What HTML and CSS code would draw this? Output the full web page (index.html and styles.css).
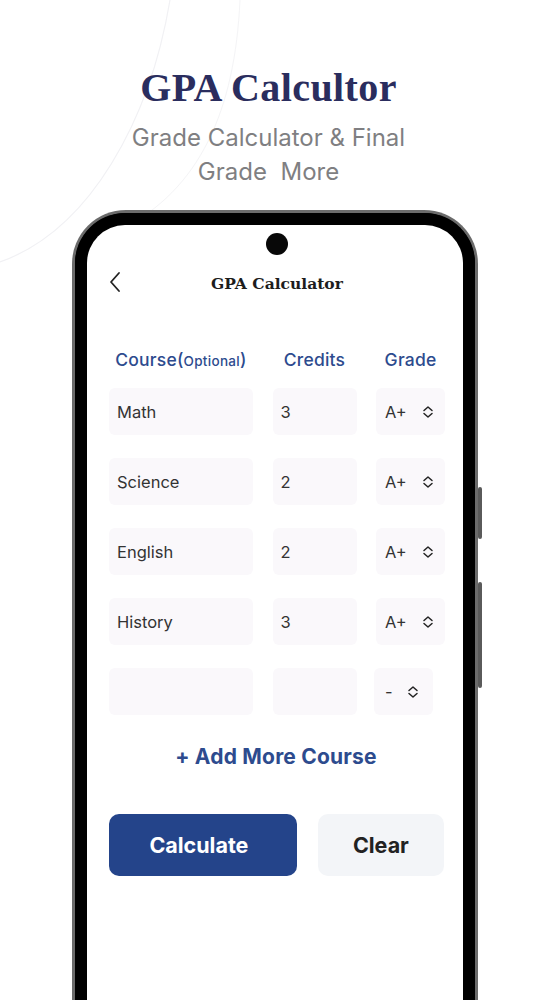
FILE: index.html
```html
<!DOCTYPE html>
<html>
<head>
<meta charset="utf-8">
<link rel="stylesheet" href="styles.css">
</head>
<body>
<div class="page">
  <svg class="deco" width="537" height="300" viewBox="0 0 537 300">
    <path d="M170 0 C 150 120, 90 230, 0 262" fill="none" stroke="#f1f1f4" stroke-width="1.2"/>
    <path d="M240 0 C 235 110, 200 190, 120 230" fill="none" stroke="#f4f4f6" stroke-width="1"/>
  </svg>
  <header class="hero">
    <h1 class="hero-title">GPA Calcultor</h1>
    <p class="hero-sub">Grade Calculator &amp; Final<br>Grade&nbsp; More</p>
  </header>
  <div class="phone">
    <span class="side-btn side-btn-1"></span>
    <span class="side-btn side-btn-2"></span>
    <div class="bezel">
      <div class="screen">
        <div class="camera"></div>
        <div class="nav">
          <svg class="back" width="14" height="22" viewBox="0 0 14 22"><path d="M11 2 L3 11 L11 20" fill="none" stroke="#222" stroke-width="1.8" stroke-linecap="round" stroke-linejoin="round"/></svg>
          <div class="nav-title">GPA Calculator</div>
        </div>
        <div class="table">
          <div class="th">Course<span class="opt">(<small>Optional</small>)</span></div>
          <div class="th">Credits</div>
          <div class="th">Grade</div>

          <div class="cell">Math</div>
          <div class="cell">3</div>
          <div class="cell grade">A+<svg class="ud" width="12" height="14" viewBox="0 0 12 14"><path d="M2 5.5 L6 2 L10 5.5 M2 8.5 L6 12 L10 8.5" fill="none" stroke="#222" stroke-width="1.5" stroke-linecap="round" stroke-linejoin="round"/></svg></div>

          <div class="cell">Science</div>
          <div class="cell">2</div>
          <div class="cell grade">A+<svg class="ud" width="12" height="14" viewBox="0 0 12 14"><path d="M2 5.5 L6 2 L10 5.5 M2 8.5 L6 12 L10 8.5" fill="none" stroke="#222" stroke-width="1.5" stroke-linecap="round" stroke-linejoin="round"/></svg></div>

          <div class="cell">English</div>
          <div class="cell">2</div>
          <div class="cell grade">A+<svg class="ud" width="12" height="14" viewBox="0 0 12 14"><path d="M2 5.5 L6 2 L10 5.5 M2 8.5 L6 12 L10 8.5" fill="none" stroke="#222" stroke-width="1.5" stroke-linecap="round" stroke-linejoin="round"/></svg></div>

          <div class="cell">History</div>
          <div class="cell">3</div>
          <div class="cell grade">A+<svg class="ud" width="12" height="14" viewBox="0 0 12 14"><path d="M2 5.5 L6 2 L10 5.5 M2 8.5 L6 12 L10 8.5" fill="none" stroke="#222" stroke-width="1.5" stroke-linecap="round" stroke-linejoin="round"/></svg></div>

          <div class="cell"></div>
          <div class="cell"></div>
          <div class="cell grade short"><span class="dash">-</span><svg class="ud" width="12" height="14" viewBox="0 0 12 14"><path d="M2 5.5 L6 2 L10 5.5 M2 8.5 L6 12 L10 8.5" fill="none" stroke="#222" stroke-width="1.5" stroke-linecap="round" stroke-linejoin="round"/></svg></div>
        </div>
        <div class="add-more">+ Add More Course</div>
        <div class="actions">
          <button class="btn btn-primary"><span class="btn-label-shift">Calculate</span></button>
          <button class="btn btn-light">Clear</button>
        </div>
      </div>
    </div>
  </div>
</div>
</body>
</html>
```
FILE: styles.css
```css
* { box-sizing: border-box; }
html, body { margin: 0; padding: 0; background: #fff; }
body { width: 537px; height: 1000px; overflow: hidden; font-family: "Inter", "Liberation Sans", sans-serif; }
.page { position: relative; width: 537px; height: 1000px; overflow: hidden; }
.deco { position: absolute; left: 0; top: 0; z-index: 0; }

.hero { position: relative; z-index: 1; padding-top: 66px; text-align: center; }
.hero-title {
  margin: 0;
  font-family: "Liberation Serif", "DejaVu Serif", serif;
  font-weight: bold;
  font-size: 40px;
  line-height: 44px;
  color: #2a2d5e;
  letter-spacing: 0.4px;
}
.hero-sub {
  margin: 11px 0 0;
  font-size: 24px;
  line-height: 34px;
  color: #7f7f82;
  font-weight: 400;
}

.phone {
  position: relative;
  z-index: 1;
  margin: 21px 0 0 72px;
  width: 406px;
  height: 800px;
  border: 3px solid #6b6b6b;
  border-bottom: none;
  border-radius: 54px 54px 0 0;
  background: #000;
}
.side-btn {
  position: absolute;
  right: -7px;
  width: 4px;
  background: #5a5a5a;
  border-radius: 2px;
}
.side-btn-1 { top: 274px; height: 52px; }
.side-btn-2 { top: 369px; height: 106px; }
.bezel {
  height: 100%;
  border: 12px solid #000;
  border-bottom: none;
  border-radius: 50px 50px 0 0;
  padding: 0;
}
.screen {
  height: 100%;
  background: #fff;
  border-radius: 38px 38px 0 0;
  padding: 8px 19px 0 21px;
  display: flex;
  flex-direction: column;
}
.camera {
  align-self: center;
  width: 22px;
  height: 22px;
  border-radius: 50%;
  background: #080808;
  margin-left: 2px;
}
.nav {
  position: relative;
  margin-top: 8px;
  height: 40px;
  display: flex;
  align-items: center;
  justify-content: center;
}
.back { position: absolute; left: 0; top: 8px; }
.nav-title {
  font-family: "DejaVu Serif", "Liberation Serif", serif;
  font-weight: bold;
  font-size: 15.5px;
  color: #1d1d1d;
  margin-left: 2px;
}

.table {
  margin-top: 44px;
  padding-left: 1px;
  display: grid;
  grid-template-columns: 144px 84px 69px;
  column-gap: 19.5px;
  row-gap: 23px;
}
.th {
  text-align: center;
  color: #2d4b8e;
  font-size: 17.5px;
  line-height: 24px;
  font-weight: 500;
  margin-bottom: -8px;
  margin-top: 1px;
  white-space: nowrap;
  letter-spacing: 0.2px;
}
.th small { font-size: 13.5px; letter-spacing: 0.3px; }
.cell {
  height: 47px;
  background: #faf8fb;
  border-radius: 6px;
  display: flex;
  align-items: center;
  padding-left: 8px;
  font-size: 16.5px;
  color: #333;
}
.grade { padding-left: 9px; }
.ud { margin-left: 15px; }
.short { width: 59px; margin-left: -2px; }
.short .dash { width: 10px; margin-left: 2px; }
.short .ud { margin-left: 12px; }

.add-more {
  margin-top: 27px;
  text-align: center;
  font-size: 21px;
  line-height: 30px;
  font-weight: 700;
  color: #2d4b8e;
  letter-spacing: 0.2px;
}
.actions {
  margin-top: 42px;
  display: flex;
  gap: 21px;
  padding-left: 1px;
}
.btn {
  height: 62px;
  border: none;
  border-radius: 10px;
  font-family: "Inter", "Liberation Sans", sans-serif;
  font-size: 21.5px;
  font-weight: 700;
  padding: 0;
}
.btn-primary { width: 189px; background: #24448a; color: #fff; }
.btn-label-shift { margin-right: 8px; }
.btn-light { width: 127px; background: #f3f5f8; color: #222; }
```
